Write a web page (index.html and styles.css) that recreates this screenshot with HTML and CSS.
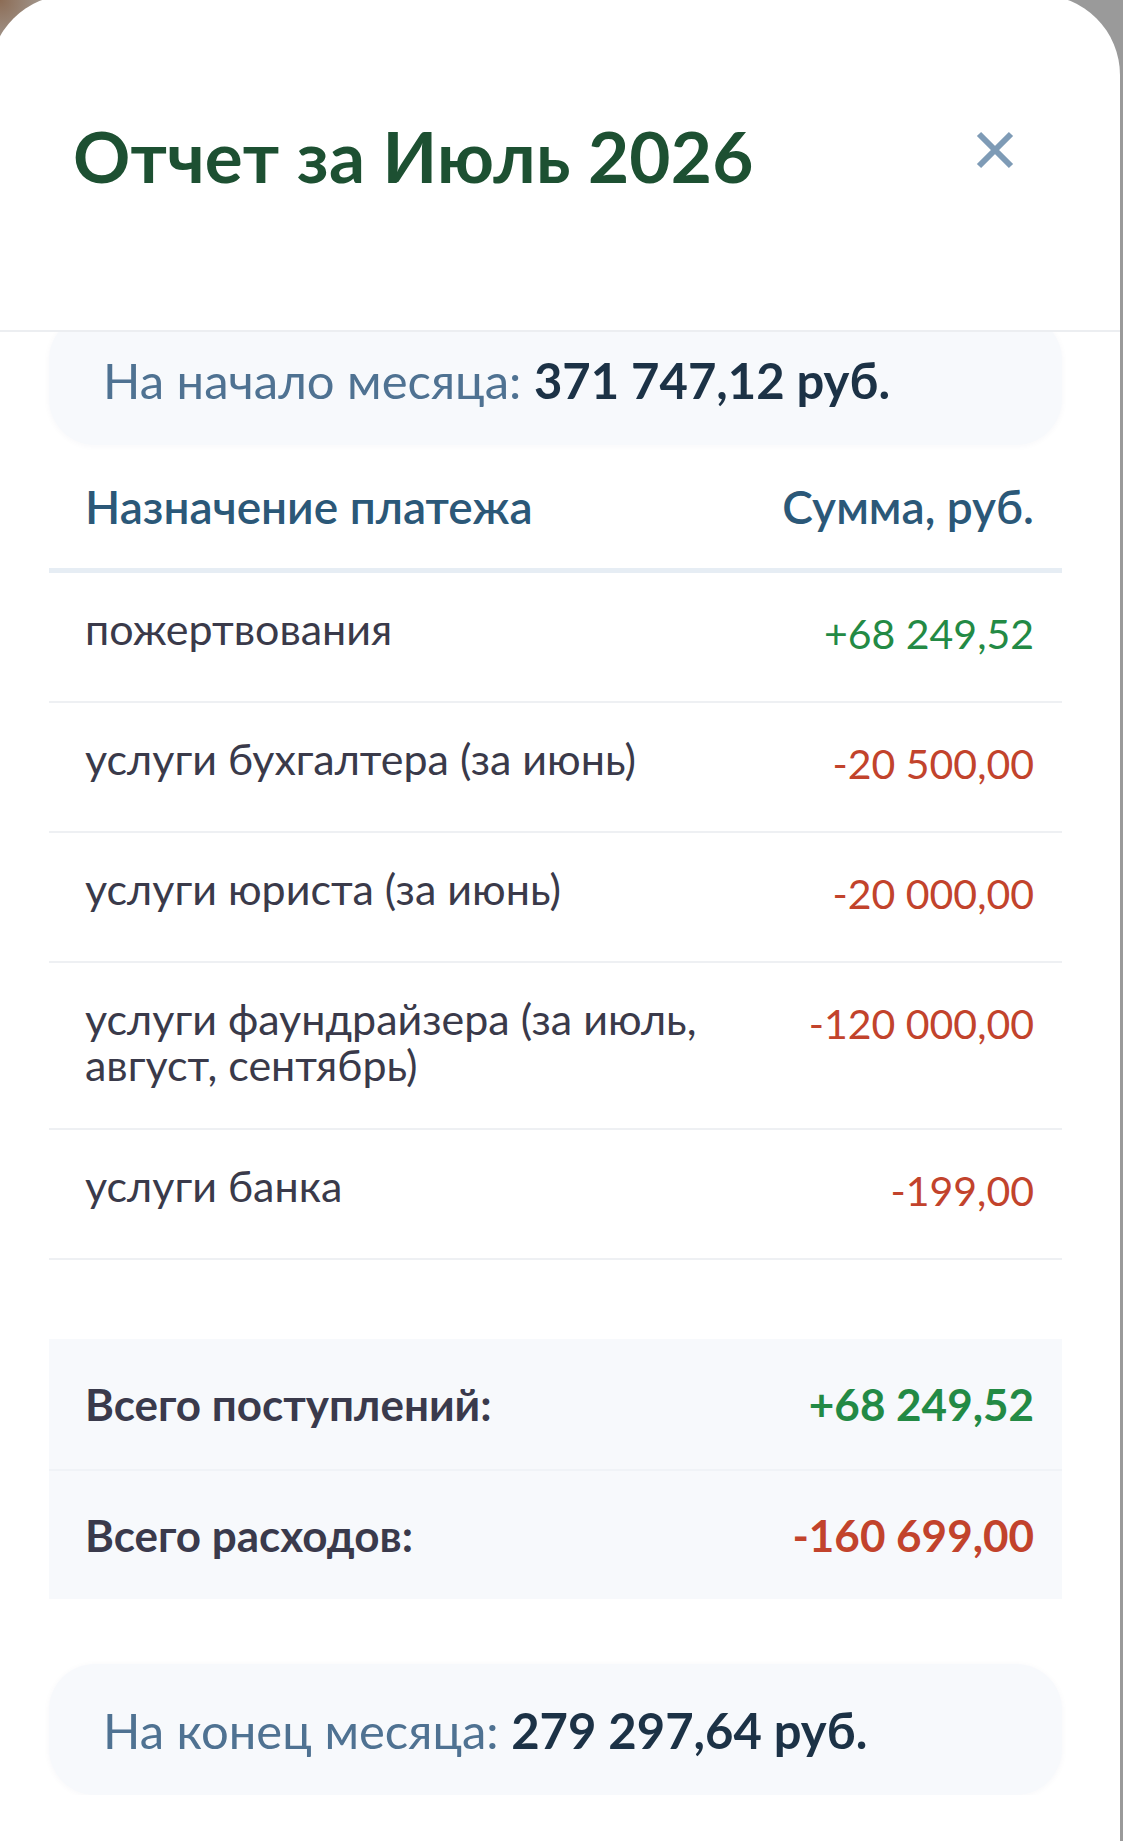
FILE: index.html
```html
<!DOCTYPE html>
<html lang="ru">
<head>
  <meta charset="UTF-8" />
  <title>Отчет за Июль 2026</title>
  <link rel="stylesheet" href="styles.css">
</head>

<body>
  <div class="sheet">
    <header class="sheet-head">
      <h1>Отчет за Июль 2026</h1>
      <button class="close" aria-label="Закрыть">
        <svg width="38" height="38" viewBox="0 0 38 38">
          <path d="M3 3 L35 35 M35 3 L3 35" stroke="#7e9bb6" stroke-width="6" stroke-linecap="butt" fill="none" />
        </svg>
      </button>
    </header>

    <div class="sheet-body">
      <div class="balance balance-start">На начало месяца: <b>371 747,12 руб.</b></div>

      <div class="report">
        <div class="report-head">
          <span>Назначение платежа</span>
          <span>Сумма, руб.</span>
        </div>
        <div class="row">
          <span class="label">пожертвования</span>
          <span class="amount plus">+68 249,52</span>
        </div>
        <div class="row">
          <span class="label">услуги бухгалтера (за июнь)</span>
          <span class="amount minus">-20 500,00</span>
        </div>
        <div class="row">
          <span class="label">услуги юриста (за июнь)</span>
          <span class="amount minus">-20 000,00</span>
        </div>
        <div class="row">
          <span class="label">услуги фаундрайзера (за июль, август, сентябрь)</span>
          <span class="amount minus">-120 000,00</span>
        </div>
        <div class="row">
          <span class="label">услуги банка</span>
          <span class="amount minus">-199,00</span>
        </div>
      </div>

      <div class="totals">
        <div class="total-row">
          <span>Всего поступлений:</span>
          <span class="plus">+68 249,52</span>
        </div>
        <div class="total-row">
          <span>Всего расходов:</span>
          <span class="minus">-160 699,00</span>
        </div>
      </div>

      <div class="balance">На конец месяца: <b>279 297,64 руб.</b></div>
    </div>
  </div>
</body>
</html>
```

FILE: styles.css
```css
/* === Reset === */
* {
  margin: 0;
  padding: 0;
  box-sizing: border-box;
}

body {
  font-family: 'Lato', 'Noto Sans', sans-serif;
  background: radial-gradient(circle at 0 0, #8c6c55 0, #a0948a 40px, #9a9a9a 90px);
  background-color: #9a9a9a;
  min-height: 1841px;
  overflow: hidden;
}

/* === Sheet === */
.sheet {
  margin: -5px 0 0 -10px;
  width: 1130px;
  min-height: 1846px;
  background: #fff;
  border-radius: 80px 80px 0 0;
}

.sheet-head {
  height: 337px;
  padding: 0 106px 14px 83px;
  display: flex;
  justify-content: space-between;
  align-items: center;
  border-bottom: 2px solid #eceef1;
}

.sheet-head h1 {
  font-size: 71px;
  font-weight: 700;
  color: #1d5032;
  letter-spacing: 0.2px;
}

.close {
  border: none;
  background: none;
  display: flex;
  margin-top: -12px;
}

.sheet-body {
  overflow: hidden;
  padding: 0 58px 0 59px;
}

/* === Balance boxes === */
.balance {
  height: 131px;
  display: flex;
  align-items: center;
  padding: 0 54px;
  background: #f7f9fc;
  border-radius: 46px;
  box-shadow: 0 1px 6px rgba(40, 60, 90, 0.04);
  font-size: 49px;
  color: #4f7292;
  white-space: pre;
}

.balance b {
  font-weight: 700;
  color: #1c3246;
}

.balance-start {
  margin-top: -18px;
}

/* === Report table === */
.report-head {
  height: 128px;
  display: flex;
  justify-content: space-between;
  align-items: center;
  padding: 0 28px 0 36px;
  border-bottom: 5px solid #e6edf4;
  font-size: 46px;
  font-weight: 600;
  color: #2b5878;
}

.row {
  display: flex;
  justify-content: space-between;
  align-items: flex-start;
  gap: 40px;
  padding: 33px 28px 40px 36px;
  border-bottom: 2px solid #eef0f3;
}

.label {
  color: #3a3a4a;
  max-width: 650px;
  font-size: 43px;
  line-height: 46px;
}

.amount {
  padding: 4px 0 3px;
  font-size: 41px;
  line-height: 48px;
  white-space: nowrap;
}

.plus {
  color: #238a45;
}

.minus {
  color: #c2432c;
}

/* === Totals === */
.totals {
  margin: 79px 0 65px;
  background: #f7f9fc;
}

.total-row {
  height: 130px;
  display: flex;
  justify-content: space-between;
  align-items: center;
  padding: 0 28px 0 36px;
  font-size: 44px;
  font-weight: 700;
  color: #3a3a4c;
}

.total-row + .total-row {
  border-top: 2px solid #f0f3f7;
}
```
